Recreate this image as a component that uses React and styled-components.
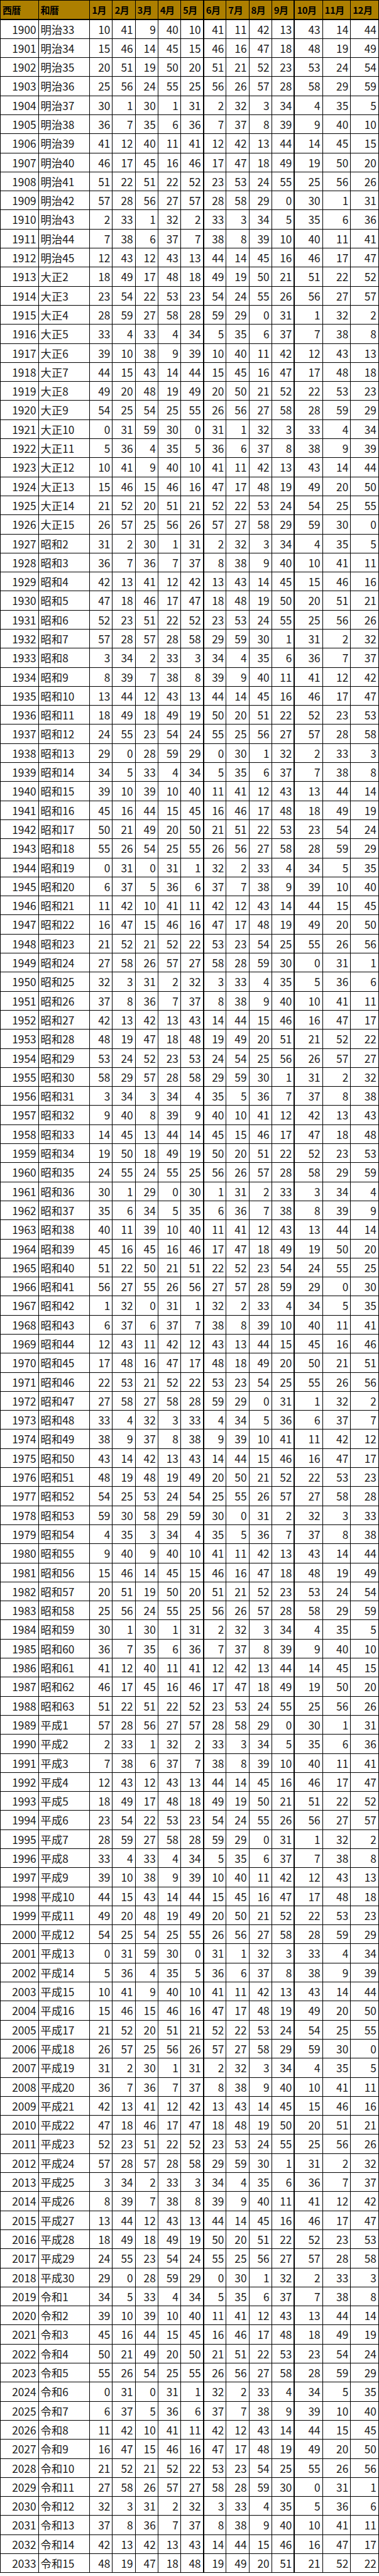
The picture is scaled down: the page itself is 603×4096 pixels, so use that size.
import React from 'react'
import styled, { createGlobalStyle } from 'styled-components'

const GlobalStyle = createGlobalStyle`
    html, body {
        margin: 0;
        padding: 0;
        background: #ffffff;
    }
    body {
        font-family: "Noto Sans CJK JP", "Noto Sans", sans-serif;
        color: #111;
    }
`;

const MONTHS = ['1月', '2月', '3月', '4月', '5月', '6月', '7月', '8月', '9月', '10月', '11月', '12月'];

// 5月・9月の右側だけ罫線が太い
const thickAfter = (i) => i === 4 || i === 8;

const eraName = (year) => {
    if (year <= 1912) return '明治' + (year - 1867);
    if (year <= 1926) return '大正' + (year - 1911);
    if (year <= 1988) return '昭和' + (year - 1925);
    if (year <= 2018) return '平成' + (year - 1988);
    return '令和' + (year - 2018);
}

// 各月1日の干支番号 - 1 (0〜59)
const kanshiBase = (year, month) => {
    const days = Math.round(Date.UTC(year, month - 1, 1) / 86400000);
    return (((days + 17) % 60) + 60) % 60;
}

const years = [];
for (let y = 1900; y <= 2033; y++) years.push(y);

function App() {
    return (
        <>
            <GlobalStyle />
            <Table>
                <colgroup>
                    <col style={{ width: '60.6px' }} />
                    <col style={{ width: '81.6px' }} />
                    {MONTHS.map((m, i) => (
                        <col key={m} style={{ width: i < 9 ? '36.2px' : '44.7px' }} />
                    ))}
                </colgroup>
                <thead>
                    <tr>
                        <Th>西暦</Th>
                        <Th>和暦</Th>
                        {MONTHS.map((m, i) => (
                            <Th key={m} $thick={thickAfter(i)}>{m}</Th>
                        ))}
                    </tr>
                </thead>
                <tbody>
                    {years.map(y => (
                        <Row key={y}>
                            <Num>{y}</Num>
                            <Era>{eraName(y)}</Era>
                            {MONTHS.map((m, i) => (
                                <Num key={m} $thick={thickAfter(i)}>{kanshiBase(y, i + 1)}</Num>
                            ))}
                        </Row>
                    ))}
                </tbody>
            </Table>
        </>
    )
}

const Table = styled.table`
    border-collapse: collapse;
    table-layout: fixed;
    width: 602px;
    border: 1px solid #000;
`;

const Th = styled.th`
    height: 29px;
    background: #ad7f00;
    color: #000;
    font-weight: 700;
    font-size: 15px;
    text-align: left;
    padding: 0 0 0 3px;
    border: 1px solid #000;
    border-right-width: ${props => props.$thick ? '2px' : '1px'};
    border-bottom-width: 2px;
    white-space: nowrap;
    overflow: hidden;
    letter-spacing: -0.5px;
`;

const Row = styled.tr`
    height: 30.3px;
`;

const Cell = styled.td`
    border: 1px solid #000;
    border-right-width: ${props => props.$thick ? '2px' : '1px'};
    font-size: 17.3px;
    font-weight: 400;
    color: #1a1a1a;
    white-space: nowrap;
    overflow: hidden;
    line-height: 1;
    padding: 0;
`;

const Num = styled(Cell)`
    text-align: right;
    padding-right: 3px;
`;

const Era = styled(Cell)`
    text-align: left;
    padding-left: 3px;
`;

export default App
